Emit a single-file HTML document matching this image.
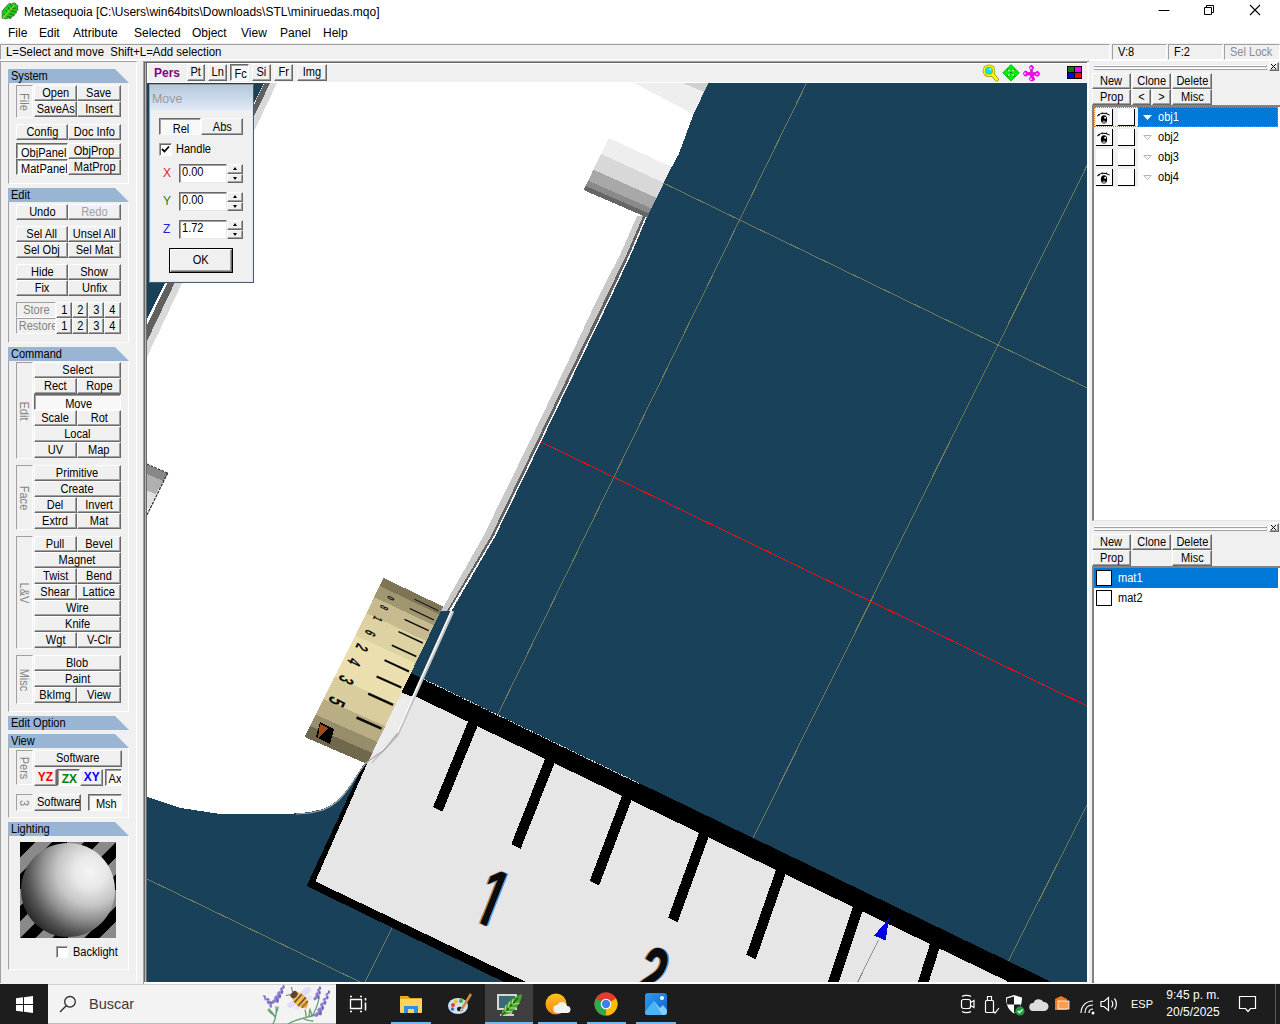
<!DOCTYPE html><html><head><meta charset="utf-8"><title>Metasequoia</title><style>
html,body{margin:0;padding:0;background:#f0f0f0;overflow:hidden}
#r{position:relative;width:1280px;height:1024px;overflow:hidden;font:12px "Liberation Sans",sans-serif;color:#000;background:#f0f0f0}
#r div{position:absolute;box-sizing:border-box;white-space:nowrap}
.t{display:inline-block;transform:scaleX(.92);transform-origin:50% 50%}
.tl{display:inline-block;transform:scaleX(.92);transform-origin:0 50%}
.b{height:16px;background:#f0f0f0;border-top:1px solid #fff;border-left:1px solid #fff;border-right:1px solid #696969;border-bottom:1px solid #696969;box-shadow:inset -1px -1px 0 #a0a0a0;text-align:center;line-height:15px;overflow:hidden}
.p{height:16px;background:#f8f8f8;border-top:1px solid #696969;border-left:1px solid #696969;border-right:1px solid #fff;border-bottom:1px solid #fff;box-shadow:inset 1px 1px 0 #a0a0a0;text-align:center;line-height:15px;overflow:hidden;padding-left:2px;padding-top:2px}
.h{left:8px;width:121px;height:14px;background:#9ab4d4;clip-path:polygon(0 0,107px 0,121px 14px,0 14px);line-height:14px;padding-left:3px}
.g{left:8px;width:121px;border-left:1px solid #a0a0a0;border-right:1px solid #fff;border-bottom:1px solid #fff}
.v{left:16px;width:17px;border-top:1px solid #a0a0a0;border-left:1px solid #a0a0a0;border-right:1px solid #fff;border-bottom:1px solid #fff;color:#848484}
.v i{position:absolute;left:7px;top:50%;font-style:normal;transform:translate(-50%,-50%) rotate(90deg) scaleX(.92);display:block;line-height:12px}
.sf{top:44px;height:16px;border-top:1px solid #a0a0a0;border-left:1px solid #a0a0a0;border-right:1px solid #fff;border-bottom:1px solid #fff;line-height:14px;padding-left:5px}
</style></head><body><div id="r">
<div style="left:0;top:0;width:1280px;height:22px;background:#fff"></div>
<div style="left:0;top:22px;width:1280px;height:21px;background:#fff"></div>
<svg style="position:absolute;left:0;top:0" width="20" height="22" viewBox="0 0 20 22"><path d="M2 18.500L2.200 11 6 6.500 9.500 3.200 12 4.300 13 3 15.500 3.200 16 5 18 5.500 17.500 8 18 10 16 11 16.500 13 14.500 13.500 14 16 12 16 11 18.500 8 18 6 19 4 18.200z" fill="#1ad01a" stroke="#2a6a3a" stroke-width=".8"/><path d="M4 13.500l2 2.500M5.500 10l2.500 3.500M8 7l2.500 4M10.500 4.500l2 4M7 16.500l4 .5M9 14l4.500 .5M11 11l4.500 .5M12.500 8.500l4-.5" stroke="#167016" stroke-width="1" fill="none"/><path d="M2.500 18.500L14 5.500" stroke="#c4d808" stroke-width="1.100"/></svg>
<div style="left:24px;top:4px;line-height:16px;font-size:12px"><span class="tl" id="ttl" style="transform:scaleX(1)">Metasequoia [C:\Users\win64bits\Downloads\STL\miniruedas.mqo]</span></div>
<svg style="position:absolute;left:1140px;top:0" width="140" height="22" viewBox="0 0 140 22"><path d="M18.5 10.5h11" stroke="#000" stroke-width="1"/><path d="M64.5 7.5h7v7h-7z M66.5 7.5v-2h7v7h-2" fill="none" stroke="#000" stroke-width="1"/><path d="M110 5l10 10M120 5l-10 10" stroke="#000" stroke-width="1.1"/></svg>
<div style="left:8px;top:25px;line-height:17px;font-size:12px" class="mn">File</div>
<div style="left:39px;top:25px;line-height:17px;font-size:12px" class="mn">Edit</div>
<div style="left:73px;top:25px;line-height:17px;font-size:12px" class="mn">Attribute</div>
<div style="left:134px;top:25px;line-height:17px;font-size:12px" class="mn">Selected</div>
<div style="left:192px;top:25px;line-height:17px;font-size:12px" class="mn">Object</div>
<div style="left:241px;top:25px;line-height:17px;font-size:12px" class="mn">View</div>
<div style="left:280px;top:25px;line-height:17px;font-size:12px" class="mn">Panel</div>
<div style="left:323px;top:25px;line-height:17px;font-size:12px" class="mn">Help</div>
<div style="left:0;top:43px;width:1280px;height:18px;background:#f0f0f0"></div>
<div class="sf" style="left:0px;top:44px;width:1110px;height:16px;"><span class="tl" style="transform:scaleX(.951)">L=Select and move&nbsp; Shift+L=Add selection</span></div>
<div class="sf" style="left:1112px;top:44px;width:55px;height:16px;"><span class="tl">V:8</span></div>
<div class="sf" style="left:1168px;top:44px;width:55px;height:16px;"><span class="tl">F:2</span></div>
<div class="sf" style="left:1224px;top:44px;width:56px;height:16px;color:#8c8c8c;"><span class="tl">Sel Lock</span></div>
<div style="left:0;top:60px;width:137px;height:924px;border-top:1px solid #fff;background:#f0f0f0"></div>
<div style="left:0;top:61px;width:138px;height:922px;border-top:1px solid #a0a0a0;border-left:1px solid #a0a0a0;border-right:2px solid #fff"></div>
<div class="h" style="top:69px"><span class="tl">System</span></div>
<div class="g" style="top:83px;height:101px"></div>
<div class="v" style="top:85px;height:33px"><i>File</i></div>
<div class="b" style="left:34px;top:85px;width:43px;"><span class="t">Open</span></div>
<div class="b" style="left:77px;top:85px;width:44px;"><span class="t">Save</span></div>
<div class="b" style="left:34px;top:101px;width:43px;"><span class="t">SaveAs</span></div>
<div class="b" style="left:77px;top:101px;width:44px;"><span class="t">Insert</span></div>
<div class="b" style="left:16px;top:124px;width:52px;"><span class="t">Config</span></div>
<div class="b" style="left:68px;top:124px;width:53px;"><span class="t">Doc Info</span></div>
<div class="p" style="left:16px;top:143px;width:52px;"><span class="t">ObjPanel</span></div>
<div class="b" style="left:68px;top:143px;width:53px;"><span class="t">ObjProp</span></div>
<div class="p" style="left:16px;top:159px;width:52px;"><span class="t">MatPanel</span></div>
<div class="b" style="left:68px;top:159px;width:53px;"><span class="t">MatProp</span></div>
<div class="h" style="top:188px"><span class="tl">Edit</span></div>
<div class="g" style="top:202px;height:141px"></div>
<div class="b" style="left:16px;top:204px;width:52px;"><span class="t">Undo</span></div>
<div class="b" style="left:68px;top:204px;width:53px;color:#a0a0a0;"><span class="t">Redo</span></div>
<div class="b" style="left:16px;top:226px;width:52px;"><span class="t">Sel All</span></div>
<div class="b" style="left:68px;top:226px;width:53px;"><span class="t">Unsel All</span></div>
<div class="b" style="left:16px;top:242px;width:52px;"><span class="t">Sel Obj</span></div>
<div class="b" style="left:68px;top:242px;width:53px;"><span class="t">Sel Mat</span></div>
<div class="b" style="left:16px;top:264px;width:52px;"><span class="t">Hide</span></div>
<div class="b" style="left:68px;top:264px;width:53px;"><span class="t">Show</span></div>
<div class="b" style="left:16px;top:280px;width:52px;"><span class="t">Fix</span></div>
<div class="b" style="left:68px;top:280px;width:53px;"><span class="t">Unfix</span></div>
<div class="v" style="top:302px;height:16px;width:40px;text-align:center;line-height:14px;overflow:hidden"><span class="t">Store</span></div>
<div class="b" style="left:56px;top:302px;width:16px;"><span class="t">1</span></div>
<div class="b" style="left:72px;top:302px;width:16px;"><span class="t">2</span></div>
<div class="b" style="left:88px;top:302px;width:16px;"><span class="t">3</span></div>
<div class="b" style="left:104px;top:302px;width:17px;"><span class="t">4</span></div>
<div class="v" style="top:318px;height:16px;width:40px;text-align:center;line-height:14px;overflow:hidden"><span class="t">Restore</span></div>
<div class="b" style="left:56px;top:318px;width:16px;"><span class="t">1</span></div>
<div class="b" style="left:72px;top:318px;width:16px;"><span class="t">2</span></div>
<div class="b" style="left:88px;top:318px;width:16px;"><span class="t">3</span></div>
<div class="b" style="left:104px;top:318px;width:17px;"><span class="t">4</span></div>
<div class="h" style="top:347px"><span class="tl">Command</span></div>
<div class="g" style="top:361px;height:351px"></div>
<div class="v" style="top:362px;height:97px"><i>Edit</i></div>
<div class="b" style="left:34px;top:362px;width:87px;"><span class="t">Select</span></div>
<div class="b" style="left:34px;top:378px;width:43px;"><span class="t">Rect</span></div>
<div class="b" style="left:77px;top:378px;width:44px;"><span class="t">Rope</span></div>
<div class="p" style="left:34px;top:394px;width:87px;"><span class="t">Move</span></div>
<div class="b" style="left:34px;top:410px;width:43px;"><span class="t">Scale</span></div>
<div class="b" style="left:77px;top:410px;width:44px;"><span class="t">Rot</span></div>
<div class="b" style="left:34px;top:426px;width:87px;"><span class="t">Local</span></div>
<div class="b" style="left:34px;top:442px;width:43px;"><span class="t">UV</span></div>
<div class="b" style="left:77px;top:442px;width:44px;"><span class="t">Map</span></div>
<div class="v" style="top:465px;height:65px"><i>Face</i></div>
<div class="b" style="left:34px;top:465px;width:87px;"><span class="t">Primitive</span></div>
<div class="b" style="left:34px;top:481px;width:87px;"><span class="t">Create</span></div>
<div class="b" style="left:34px;top:497px;width:43px;"><span class="t">Del</span></div>
<div class="b" style="left:77px;top:497px;width:44px;"><span class="t">Invert</span></div>
<div class="b" style="left:34px;top:513px;width:43px;"><span class="t">Extrd</span></div>
<div class="b" style="left:77px;top:513px;width:44px;"><span class="t">Mat</span></div>
<div class="v" style="top:536px;height:113px"><i>L&amp;V</i></div>
<div class="b" style="left:34px;top:536px;width:43px;"><span class="t">Pull</span></div>
<div class="b" style="left:77px;top:536px;width:44px;"><span class="t">Bevel</span></div>
<div class="b" style="left:34px;top:552px;width:87px;"><span class="t">Magnet</span></div>
<div class="b" style="left:34px;top:568px;width:43px;"><span class="t">Twist</span></div>
<div class="b" style="left:77px;top:568px;width:44px;"><span class="t">Bend</span></div>
<div class="b" style="left:34px;top:584px;width:43px;"><span class="t">Shear</span></div>
<div class="b" style="left:77px;top:584px;width:44px;"><span class="t">Lattice</span></div>
<div class="b" style="left:34px;top:600px;width:87px;"><span class="t">Wire</span></div>
<div class="b" style="left:34px;top:616px;width:87px;"><span class="t">Knife</span></div>
<div class="b" style="left:34px;top:632px;width:43px;"><span class="t">Wgt</span></div>
<div class="b" style="left:77px;top:632px;width:44px;"><span class="t">V-Clr</span></div>
<div class="v" style="top:655px;height:49px"><i>Misc</i></div>
<div class="b" style="left:34px;top:655px;width:87px;"><span class="t">Blob</span></div>
<div class="b" style="left:34px;top:671px;width:87px;"><span class="t">Paint</span></div>
<div class="b" style="left:34px;top:687px;width:43px;"><span class="t">BkImg</span></div>
<div class="b" style="left:77px;top:687px;width:44px;"><span class="t">View</span></div>
<div class="h" style="top:716px"><span class="tl">Edit Option</span></div>
<div class="h" style="top:734px"><span class="tl">View</span></div>
<div class="g" style="top:748px;height:70px"></div>
<div class="v" style="top:750px;height:35px"><i>Pers</i></div>
<div class="b" style="left:34px;top:750px;width:88px;height:17px;line-height:16px;line-height:14px;"><span class="t">Software</span></div>
<div class="b" style="left:34px;top:769px;width:23px;height:17px;line-height:16px;font-size:13px;line-height:14px;color:#f00;"><span class="t"><b>YZ</b></span></div>
<div class="p" style="left:57px;top:769px;width:23px;height:17px;line-height:16px;font-size:13px;line-height:14px;color:#008000;"><span class="t"><b>ZX</b></span></div>
<div class="b" style="left:80px;top:769px;width:23px;height:17px;line-height:16px;font-size:13px;line-height:14px;color:#00f;"><span class="t"><b>XY</b></span></div>
<div class="p" style="left:105px;top:769px;width:17px;height:17px;line-height:16px;line-height:14px;"><span class="t">Ax</span></div>
<div class="v" style="top:794px;height:17px"><i>3</i></div>
<div class="b" style="left:34px;top:794px;width:47px;height:17px;line-height:16px;line-height:14px;"><span class="t">Software</span></div>
<div class="p" style="left:88px;top:794px;width:34px;height:17px;line-height:16px;line-height:14px;"><span class="t">Msh</span></div>
<div class="h" style="top:822px"><span class="tl">Lighting</span></div>
<div class="g" style="top:836px;height:134px"></div>
<svg style="position:absolute;left:20px;top:842px" width="96" height="96" viewBox="0 0 96 96"><defs><radialGradient id="sg" gradientUnits="userSpaceOnUse" cx="70" cy="30" r="80"><stop offset="0" stop-color="#f4f4f4"/><stop offset="0.2" stop-color="#e8e8e8"/><stop offset="0.42" stop-color="#c4c4c4"/><stop offset="0.6" stop-color="#909090"/><stop offset="0.78" stop-color="#525252"/><stop offset="0.92" stop-color="#2e2e2e"/><stop offset="1" stop-color="#242424"/></radialGradient></defs><path d="M0 0h16L-80 96h-16z" fill="#000"/><path d="M16 0h16L-64 96h-16z" fill="#8a8a8a"/><path d="M32 0h16L-48 96h-16z" fill="#000"/><path d="M48 0h16L-32 96h-16z" fill="#8a8a8a"/><path d="M64 0h16L-16 96h-16z" fill="#000"/><path d="M80 0h16L0 96h-16z" fill="#8a8a8a"/><path d="M96 0h16L16 96h-16z" fill="#000"/><path d="M112 0h16L32 96h-16z" fill="#8a8a8a"/><path d="M128 0h16L48 96h-16z" fill="#000"/><path d="M144 0h16L64 96h-16z" fill="#8a8a8a"/><path d="M160 0h16L80 96h-16z" fill="#000"/><path d="M176 0h16L96 96h-16z" fill="#8a8a8a"/><circle cx="48" cy="48" r="47" fill="url(#sg)"/></svg>
<div style="left:56px;top:946px;width:12px;height:12px;background:#fff;border-top:1px solid #a0a0a0;border-left:1px solid #a0a0a0;border-right:1px solid #fff;border-bottom:1px solid #fff;box-shadow:inset 1px 1px 0 #696969"></div>
<div style="left:73px;top:945px;line-height:14px"><span class="tl">Backlight</span></div>
<div style="left:137px;top:61px;width:8px;height:923px;background:#f0f0f0"></div>
<div style="left:143px;top:61px;width:946px;height:923px;background:#fff;border-left:1px solid #a0a0a0;border-top:1px solid #a0a0a0"></div>
<div style="left:144px;top:62px;width:943px;height:920px;background:#19415a;border-left:1px solid #696969;border-top:1px solid #696969"></div>
<div style="left:145px;top:63px;width:2px;height:919px;border-left:1px solid #b4b4b4;border-right:1px solid #696969"></div>
<div style="left:147px;top:63px;width:940px;height:20px;background:#f0f0f0;border-top:1px solid #fff;border-left:1px solid #fff;border-bottom:1px solid #fff"></div>
<div style="left:154px;top:66px;line-height:15px;color:#800080;font-weight:bold;font-size:12px">Pers</div>
<div class="b" style="left:187px;top:64px;width:18px;height:17px;line-height:16px;line-height:14px;"><span class="t">Pt</span></div>
<div class="b" style="left:208px;top:64px;width:19px;height:17px;line-height:16px;line-height:14px;"><span class="t">Ln</span></div>
<div class="p" style="left:230px;top:64px;width:19px;height:17px;line-height:16px;line-height:14px;"><span class="t">Fc</span></div>
<div class="b" style="left:252px;top:64px;width:19px;height:17px;line-height:16px;line-height:14px;"><span class="t">Si</span></div>
<div class="b" style="left:274px;top:64px;width:19px;height:17px;line-height:16px;line-height:14px;"><span class="t">Fr</span></div>
<div class="b" style="left:297px;top:64px;width:30px;height:17px;line-height:16px;line-height:14px;"><span class="t">Img</span></div>
<svg style="position:absolute;left:980px;top:63px" width="104" height="19" viewBox="0 0 104 19">
<path d="M12.500 11.500l4.300 5" stroke="#a0a000" stroke-width="4.200" stroke-linecap="round"/><circle cx="9" cy="7.700" r="6.300" fill="#a0a000"/><circle cx="9" cy="7.700" r="5.500" fill="#ffff00"/><path d="M12.500 11.500l4.300 5" stroke="#ffff00" stroke-width="2.600" stroke-linecap="round"/><circle cx="9" cy="7.700" r="3.900" fill="#a0a000"/><circle cx="9" cy="7.700" r="3.300" fill="#00e4ff"/><circle cx="10.300" cy="6.300" r="1" fill="#d8ffff"/>
<path d="M31 1.600l8.200 8.200-8.200 8.200-8.200-8.200z" fill="#00f000" stroke="#00b000" stroke-width=".8"/><path d="M27.500 6.300l2 2M34.500 6.300l-2 2M27.500 13.300l2-2M34.500 13.300l-2-2" stroke="#d0ffd0" stroke-width="1.300"/><path d="M27 5.800h2v.8h-1.200v1.200H27zM35 5.800h-2v.8h1.200v1.200H35zM27 13.800h2v-.8h-1.200v-1.200H27zM35 13.800h-2v-.8h1.200v-1.200H35z" fill="#00a000"/><rect x="30.500" y="9.300" width="1" height="1" fill="#000"/>
<path d="M51 2.500c2 0 3 1.500 2.500 3l-1 1v3h3l1-1c1.500-.5 3 .5 3 2.500s-2 2.500-3.500 2l-.5-1h-2v2.500l1 .5c.5 1.500-.5 3-2.500 3s-3-1.500-2.500-3l1-.5V12h-3l-1 1c-1.500.5-3-.5-3-2.500s2-3 3.500-2l.5 1h3V6.500l-1-1c-.5-1.500.5-3 2.500-3z" fill="#ff00ff" stroke="#c000c0" stroke-width=".6"/><circle cx="51" cy="5" r=".9" fill="#f0f0f0"/><circle cx="57" cy="11" r=".9" fill="#f0f0f0"/><circle cx="45" cy="10.500" r=".9" fill="#f0f0f0"/><circle cx="51" cy="16" r=".9" fill="#f0f0f0"/>
<rect x="87" y="3" width="15" height="13" fill="#000"/><rect x="88" y="4" width="6" height="5" fill="#008000"/><rect x="95" y="4" width="6" height="5" fill="#f0f"/><rect x="88" y="10" width="6" height="5" fill="#00f"/><rect x="95" y="10" width="6" height="5" fill="#f00"/>
</svg>
<svg style="position:absolute;left:147px;top:83px" width="940" height="899" viewBox="147 83 940 899" shape-rendering="crispEdges">
<defs><clipPath id="c1"><path d="M0 -44H16.4V1H10.1V-4.8H0z"/></clipPath></defs>
<rect x="147" y="83" width="940" height="899" fill="#19415a"/>
<line x1="806.6" y1="83.0" x2="497.0" y2="716.0" stroke="#717c5c" stroke-width="1" />
<line x1="655.0" y1="179.0" x2="1087.0" y2="388.0" stroke="#717c5c" stroke-width="1" />
<line x1="1087.0" y1="165.6" x2="752.0" y2="840.0" stroke="#717c5c" stroke-width="1" />
<line x1="1087.0" y1="805.0" x2="1005.0" y2="968.0" stroke="#717c5c" stroke-width="1" />
<line x1="147.0" y1="879.0" x2="360.0" y2="982.0" stroke="#717c5c" stroke-width="1" />
<line x1="393.0" y1="926.0" x2="365.0" y2="982.0" stroke="#717c5c" stroke-width="1" />
<line x1="541.0" y1="442.0" x2="1087.0" y2="706.0" stroke="#e81010" stroke-width="1" />
<polygon points="407.0,671.0 1051.5,982.0 503.8,982.0 306.5,886.0" fill="#000000" />
<polygon points="400.0,689.0 1009.0,982.0 526.0,982.0 315.3,881.4" fill="#e6e6e6" />
<polygon points="398.0,671.0 420.0,679.0 413.0,697.0 396.0,690.0" fill="#000" />
<line x1="421.0" y1="678.0" x2="640.0" y2="784.0" stroke="#ffffff" stroke-width="1" stroke-dasharray="2 1" opacity=".85"/>
<polygon points="469.3,718.7 478.7,723.3 442.4,811.8 433.0,807.2" fill="#000" />
<polygon points="546.3,755.6 555.7,760.1 520.7,848.6 511.3,844.1" fill="#000" />
<polygon points="623.3,792.4 632.7,797.0 599.1,885.5 589.7,880.9" fill="#000" />
<polygon points="700.3,829.3 709.7,833.8 677.5,922.3 668.1,917.8" fill="#000" />
<polygon points="777.3,866.1 786.7,870.7 755.8,959.2 746.4,954.6" fill="#000" />
<polygon points="854.3,903.0 863.7,907.5 834.2,996.0 824.8,991.5" fill="#000" />
<polygon points="931.3,939.8 940.7,944.4 912.6,1032.9 903.2,1028.3" fill="#000" />
<polygon points="1008.3,976.7 1017.7,981.2 990.9,1069.7 981.5,1065.2" fill="#000" />
<text x="0" y="0" transform="matrix(0.97 0.47 -0.68 1.72 468.9 918.5)" font-family="Liberation Sans, sans-serif" font-weight="bold" font-size="44" fill="#c88a48" clip-path="url(#c1)">1</text>
<text x="0" y="0" transform="matrix(0.97 0.47 -0.68 1.72 472.1 918.5)" font-family="Liberation Sans, sans-serif" font-weight="bold" font-size="44" fill="#4a9cf0" clip-path="url(#c1)">1</text>
<text x="0" y="0" transform="matrix(0.97 0.47 -0.68 1.72 470.5 918.5)" font-family="Liberation Sans, sans-serif" font-weight="bold" font-size="44" fill="#0c0c0c" clip-path="url(#c1)">1</text>
<text x="0" y="0" transform="matrix(0.97 0.47 -0.68 1.72 627.4 996)" font-family="Liberation Sans, sans-serif" font-weight="bold" font-size="44" fill="#c88a48">2</text>
<text x="0" y="0" transform="matrix(0.97 0.47 -0.68 1.72 630.6 996)" font-family="Liberation Sans, sans-serif" font-weight="bold" font-size="44" fill="#4a9cf0">2</text>
<text x="0" y="0" transform="matrix(0.97 0.47 -0.68 1.72 629 996)" font-family="Liberation Sans, sans-serif" font-weight="bold" font-size="44" fill="#0c0c0c">2</text>
<polygon points="404.0,697.0 414.0,697.0 396.0,735.0 368.0,762.0 364.0,764.0 391.0,706.0" fill="#ececec" />
<line x1="878.4" y1="940.0" x2="857.8" y2="982.0" stroke="#909090" stroke-width="1" />
<polygon points="888.8,918.7 874.0,935.6 885.7,940.5" fill="#0000e0" />
<polygon points="264.0,83.0 264.5,83.0 147.0,325.0 147.0,319.0" fill="#ffffff" />
<polygon points="264.5,83.0 270.0,83.0 147.0,341.0 147.0,325.0" fill="#606060" />
<polygon points="270.0,83.0 277.0,83.0 147.0,357.0 147.0,341.0" fill="#d9d9d9" />
<polygon points="277.0,83.0 708.4,83.0 693.6,114.0 678.8,154.0 669.0,172.0 656.0,199.0 647.4,216.0 631.3,253.8 608.3,302.7 580.5,360.0 541.0,442.0 495.4,536.0 451.5,611.0 441.0,609.0 407.7,671.0 391.0,706.0 365.5,762.0 358.0,773.0 351.0,784.0 345.0,792.0 339.0,799.0 331.0,805.0 323.0,809.0 310.0,812.0 294.0,813.5 217.0,813.5 181.0,808.0 147.0,797.0 147.0,357.0" fill="#ffffff" />
<polygon points="634.0,83.0 682.6,83.0 703.8,91.6 708.4,83.0 708.4,83.0 693.0,114.0" fill="#eeeeee" />
<polygon points="682.6,83.0 708.4,83.0 704.2,92.0" fill="#d0d0d0" />
<polygon points="637.1,216.0 620.5,253.8 595.6,302.7 568.8,360.0 529.5,442.0 483.5,536.0 441.0,611.0 447.0,611.0 491.0,536.0 536.5,442.0 575.8,360.0 603.4,302.7 626.9,253.8 643.0,216.0" fill="#c8c8c8" />
<polygon points="643.0,216.0 626.9,253.8 603.4,302.7 575.8,360.0 536.5,442.0 491.0,536.0 447.0,611.0 450.5,611.0 495.4,536.0 541.0,442.0 580.5,360.0 608.3,302.7 631.3,253.8 647.4,216.0" fill="#606060" />
<polygon points="645.8,216.0 629.7,253.8 606.7,302.7 578.9,360.0 539.4,442.0 493.8,536.0 448.9,611.0 450.5,611.0 495.4,536.0 541.0,442.0 580.5,360.0 608.3,302.7 631.3,253.8 647.4,216.0" fill="#f4f4f4" />
<polygon points="609.0,138.0 671.5,167.0 663.9,182.7 601.1,154.1" fill="#eeeeee" />
<polygon points="601.1,154.1 663.9,182.7 656.6,197.8 593.4,169.7" fill="#d8d8d8" />
<polygon points="593.4,169.7 656.6,197.8 651.4,208.4 588.0,180.6" fill="#a8a8a8" />
<polygon points="588.0,180.6 651.4,208.4 649.0,213.5 585.4,185.8" fill="#8a8a8a" />
<polygon points="585.4,185.8 649.0,213.5 647.0,217.5 583.4,190.0" fill="#666666" />
<polygon points="147.0,464.0 167.7,473.0 163.4,481.0 147.0,474.2" fill="#888888" />
<polygon points="147.0,474.2 163.4,481.0 155.8,494.0 147.0,490.6" fill="#b0b0b0" />
<polygon points="147.0,490.6 155.8,494.0 149.5,508.0 147.0,508.0" fill="#e0e0e0" />
<line x1="167.7" y1="473.0" x2="147.0" y2="514.8" stroke="#222" stroke-width="1.2" stroke-dasharray="3 1" shape-rendering="auto"/>
<line x1="147.0" y1="464.0" x2="167.7" y2="473.0" stroke="#222" stroke-width="1" stroke-dasharray="2.500 1.500" shape-rendering="auto"/>
<polygon points="383.7,578.0 443.0,606.5 439.2,614.4 379.7,586.0" fill="#7e7556" />
<polygon points="379.7,586.0 439.2,614.4 433.9,625.4 374.2,597.1" fill="#a0966f" />
<polygon points="374.2,597.1 433.9,625.4 426.3,641.1 366.3,613.0" fill="#c6ba8e" />
<polygon points="366.3,613.0 426.3,641.1 415.6,663.2 355.2,635.2" fill="#ddd2a2" />
<polygon points="355.2,635.2 415.6,663.2 395.9,704.1 334.7,676.6" fill="#ebdfaf" />
<polygon points="334.7,676.6 395.9,704.1 385.2,726.2 323.6,698.8" fill="#d9cd9d" />
<polygon points="323.6,698.8 385.2,726.2 377.6,742.0 315.7,714.7" fill="#b9ad84" />
<polygon points="315.7,714.7 377.6,742.0 372.3,753.0 310.1,725.9" fill="#978d6a" />
<polygon points="310.1,725.9 372.3,753.0 367.0,764.0 304.6,737.0" fill="#70684d" />
<line x1="414.4" y1="599.2" x2="438.4" y2="610.7" stroke="#0a0a0a" stroke-width="1.0" shape-rendering="auto"/>
<line x1="409.8" y1="608.5" x2="433.9" y2="620.0" stroke="#0a0a0a" stroke-width="1.2" shape-rendering="auto"/>
<line x1="404.5" y1="619.3" x2="428.7" y2="630.7" stroke="#0a0a0a" stroke-width="1.4" shape-rendering="auto"/>
<line x1="398.5" y1="631.6" x2="422.8" y2="643.0" stroke="#0a0a0a" stroke-width="1.6" shape-rendering="auto"/>
<line x1="391.8" y1="645.2" x2="416.3" y2="656.5" stroke="#0a0a0a" stroke-width="1.8" shape-rendering="auto"/>
<line x1="384.5" y1="660.2" x2="409.0" y2="671.5" stroke="#0a0a0a" stroke-width="2.0" shape-rendering="auto"/>
<line x1="376.6" y1="676.4" x2="401.3" y2="687.6" stroke="#0a0a0a" stroke-width="2.2" shape-rendering="auto"/>
<line x1="368.2" y1="693.6" x2="393.0" y2="704.8" stroke="#0a0a0a" stroke-width="2.4000000000000004" shape-rendering="auto"/>
<line x1="356.5" y1="717.5" x2="381.5" y2="728.6" stroke="#0a0a0a" stroke-width="2.6" shape-rendering="auto"/>
<text transform="translate(391.0 598.2) rotate(116) scale(0.8 1.5)" font-family="Liberation Sans, sans-serif" font-weight="bold" font-size="7" fill="#0c0c0c" text-anchor="middle" dominant-baseline="central">0</text>
<text transform="translate(384.5 607.7) rotate(116) scale(0.8 1.5)" font-family="Liberation Sans, sans-serif" font-weight="bold" font-size="8" fill="#0c0c0c" text-anchor="middle" dominant-baseline="central">8</text>
<text transform="translate(378.1 619.1) rotate(116) scale(0.8 1.5)" font-family="Liberation Sans, sans-serif" font-weight="bold" font-size="9" fill="#0c0c0c" text-anchor="middle" dominant-baseline="central">1</text>
<text transform="translate(369.9 633.0) rotate(116) scale(0.8 1.5)" font-family="Liberation Sans, sans-serif" font-weight="bold" font-size="10.5" fill="#0c0c0c" text-anchor="middle" dominant-baseline="central">6</text>
<text transform="translate(362.0 647.6) rotate(116) scale(0.8 1.5)" font-family="Liberation Sans, sans-serif" font-weight="bold" font-size="12" fill="#0c0c0c" text-anchor="middle" dominant-baseline="central">2</text>
<text transform="translate(354.4 662.0) rotate(116) scale(0.8 1.5)" font-family="Liberation Sans, sans-serif" font-weight="bold" font-size="13" fill="#0c0c0c" text-anchor="middle" dominant-baseline="central">4</text>
<text transform="translate(346.3 679.9) rotate(116) scale(0.8 1.5)" font-family="Liberation Sans, sans-serif" font-weight="bold" font-size="14.5" fill="#0c0c0c" text-anchor="middle" dominant-baseline="central">3</text>
<text transform="translate(336.8 701.8) rotate(116) scale(0.8 1.5)" font-family="Liberation Sans, sans-serif" font-weight="bold" font-size="16" fill="#0c0c0c" text-anchor="middle" dominant-baseline="central">5</text>
<polygon points="320.0,722.0 334.0,729.0 330.0,744.0 316.0,737.0" fill="#000" />
<polygon points="320.0,724.0 328.0,728.0 318.0,738.0" fill="#a04818" />
<polyline points="452.5,611 421.6,679.5 397,735 371,762" fill="none" stroke="#c4c4c4" stroke-width="3.6" shape-rendering="auto"/>
<polyline points="451.5,611 420.6,679.5 396,735 370,762" fill="none" stroke="#fff" stroke-width="1.6" shape-rendering="auto"/>
<polyline points="398,733 384,750 366,763 358,774 351,785 345,793 339,800 331,806 323,810 310,813 296,814" fill="none" stroke="#a8a8a8" stroke-width="1.2" shape-rendering="auto"/>
</svg>
<div style="left:149px;top:84px;width:105px;height:199px;background:#f0f0f0;border:1px solid #4a5a6a;border-top-color:#8ea0b4;border-left-color:#8ea0b4"></div>
<div style="left:150px;top:85px;width:103px;height:197px;border:1px solid #dce8f6"></div>
<div style="left:150px;top:85px;width:103px;height:25px;background:linear-gradient(#b4c8dc,#dfe9f6)"></div>
<div style="left:152px;top:92px;line-height:14px;color:#9a9a9a;font-size:13.500px"><span class="tl">Move</span></div>
<div class="p" style="left:159px;top:118px;width:42px;height:17px;line-height:16px;"><span class="t">Rel</span></div>
<div class="b" style="left:201px;top:118px;width:42px;height:17px;line-height:16px;"><span class="t">Abs</span></div>
<div style="left:159px;top:143px;width:13px;height:13px;background:#fff;border-top:1px solid #a0a0a0;border-left:1px solid #a0a0a0;border-right:1px solid #fff;border-bottom:1px solid #fff;box-shadow:inset 1px 1px 0 #696969"></div>
<svg style="position:absolute;left:161px;top:145px" width="9" height="9" viewBox="0 0 9 9"><path d="M1 4l2.500 2.500L8 1.500" fill="none" stroke="#000" stroke-width="1.8"/></svg>
<div style="left:176px;top:142px;line-height:14px"><span class="tl">Handle</span></div>
<div style="left:163px;top:166px;line-height:14px;color:#e02020">X</div>
<div style="left:179px;top:164px;width:48px;height:19px;background:#fff;border:1px solid #696969;border-right-color:#e8e8e8;border-bottom-color:#e8e8e8;box-shadow:inset 1px 1px 0 #a0a0a0;line-height:15px;padding-left:2px"><span class="tl">0.00</span></div>
<div class="b" style="left:227px;top:164px;width:16px;height:10px"></div>
<svg style="position:absolute;left:233px;top:167px" width="4" height="3" viewBox="0 0 4 3"><path d="M0 3L2 0L4 3z" fill="#000"/></svg>
<div class="b" style="left:227px;top:174px;width:16px;height:9px"></div>
<svg style="position:absolute;left:233px;top:177px" width="4" height="3" viewBox="0 0 4 3"><path d="M0 0L2 3L4 0z" fill="#000"/></svg>
<div style="left:163px;top:194px;line-height:14px;color:#208020">Y</div>
<div style="left:179px;top:192px;width:48px;height:19px;background:#fff;border:1px solid #696969;border-right-color:#e8e8e8;border-bottom-color:#e8e8e8;box-shadow:inset 1px 1px 0 #a0a0a0;line-height:15px;padding-left:2px"><span class="tl">0.00</span></div>
<div class="b" style="left:227px;top:192px;width:16px;height:10px"></div>
<svg style="position:absolute;left:233px;top:195px" width="4" height="3" viewBox="0 0 4 3"><path d="M0 3L2 0L4 3z" fill="#000"/></svg>
<div class="b" style="left:227px;top:202px;width:16px;height:9px"></div>
<svg style="position:absolute;left:233px;top:205px" width="4" height="3" viewBox="0 0 4 3"><path d="M0 0L2 3L4 0z" fill="#000"/></svg>
<div style="left:163px;top:222px;line-height:14px;color:#2020e0">Z</div>
<div style="left:179px;top:220px;width:48px;height:19px;background:#fff;border:1px solid #696969;border-right-color:#e8e8e8;border-bottom-color:#e8e8e8;box-shadow:inset 1px 1px 0 #a0a0a0;line-height:15px;padding-left:2px"><span class="tl">1.72</span></div>
<div class="b" style="left:227px;top:220px;width:16px;height:10px"></div>
<svg style="position:absolute;left:233px;top:223px" width="4" height="3" viewBox="0 0 4 3"><path d="M0 3L2 0L4 3z" fill="#000"/></svg>
<div class="b" style="left:227px;top:230px;width:16px;height:9px"></div>
<svg style="position:absolute;left:233px;top:233px" width="4" height="3" viewBox="0 0 4 3"><path d="M0 0L2 3L4 0z" fill="#000"/></svg>
<div style="left:169px;top:248px;width:64px;height:25px;border:1px solid #000"></div>
<div class="b" style="left:170px;top:249px;width:62px;height:23px;line-height:22px;line-height:20px;"><span class="t">OK</span></div>
<div style="left:1090px;top:60px;width:190px;height:924px;background:#f0f0f0;border-top:1px solid #fff"></div>
<div style="left:1094px;top:65px;width:173px;height:2px;border-top:1px solid #fff;border-bottom:1px solid #a0a0a0;border-right:1px solid #a0a0a0"></div>
<div style="left:1094px;top:68px;width:173px;height:2px;border-top:1px solid #fff;border-bottom:1px solid #a0a0a0;border-right:1px solid #a0a0a0"></div>
<div class="b" style="left:1269px;top:62px;width:10px;height:9px"></div>
<svg style="position:absolute;left:1271px;top:64px" width="5" height="5" viewBox="0 0 5 5"><path d="M0 0l5 5M5 0l-5 5" stroke="#000" stroke-width="1"/></svg>
<div class="b" style="left:1092px;top:73px;width:39px;"><span class="t">New</span></div>
<div class="b" style="left:1132px;top:73px;width:39px;"><span class="t">Clone</span></div>
<div class="b" style="left:1172px;top:73px;width:40px;"><span class="t">Delete</span></div>
<div class="b" style="left:1092px;top:89px;width:39px;"><span class="t">Prop</span></div>
<div class="b" style="left:1132px;top:89px;width:19px;"><span class="t">&lt;</span></div>
<div class="b" style="left:1152px;top:89px;width:19px;"><span class="t">&gt;</span></div>
<div class="b" style="left:1172px;top:89px;width:40px;"><span class="t">Misc</span></div>
<div style="left:1092px;top:105px;width:188px;height:416px;background:#fff;border-top:2px solid #828282;border-left:2px solid #828282;border-bottom:1px solid #e3e3e3"></div>
<div style="left:1094px;top:107px;width:44px;height:20px;background:#f0f0f0"></div>
<div style="left:1138px;top:107px;width:140px;height:20px;background:#0078d7"></div>
<div style="left:1094px;top:107px;width:184px;height:20px;border:1px dotted #d87a1c"></div>
<div style="left:1096px;top:109px;width:17px;height:17px;background:#fff;border-right:1px solid #000;border-bottom:1px solid #000"><svg style="position:absolute;left:0;top:1px" width="16" height="16" viewBox="0 0 17 17"><path d="M1.500 6.500C4 3 10 2.500 14.500 5.500" fill="none" stroke="#000" stroke-width="1.100"/><path d="M2.500 4.500l1 1.500M6.500 2.500l.5 1.500M11 2.500l-.5 1.500" stroke="#000" stroke-width=".9"/><ellipse cx="8.500" cy="10" rx="3.300" ry="4.300" fill="#000"/><circle cx="8.500" cy="13" r="1.800" fill="#888"/><circle cx="9.700" cy="8.300" r="1.100" fill="#fff"/></svg></div>
<div style="left:1118px;top:109px;width:17px;height:17px;background:#fff;border-right:1px solid #000;border-bottom:1px solid #000"></div>
<svg style="position:absolute;left:1143px;top:115px" width="9" height="5" viewBox="0 0 9 5"><path d="M0 0h9L4.500 5z" fill="#fff"/></svg>
<div style="left:1158px;top:110px;line-height:14px;color:#fff"><span class="tl">obj1</span></div>
<div style="left:1094px;top:127px;width:44px;height:20px;background:#f0f0f0"></div>
<div style="left:1096px;top:129px;width:17px;height:17px;background:#fff;border-right:1px solid #000;border-bottom:1px solid #000"><svg style="position:absolute;left:0;top:1px" width="16" height="16" viewBox="0 0 17 17"><path d="M1.500 6.500C4 3 10 2.500 14.500 5.500" fill="none" stroke="#000" stroke-width="1.100"/><path d="M2.500 4.500l1 1.500M6.500 2.500l.5 1.500M11 2.500l-.5 1.500" stroke="#000" stroke-width=".9"/><ellipse cx="8.500" cy="10" rx="3.300" ry="4.300" fill="#000"/><circle cx="8.500" cy="13" r="1.800" fill="#888"/><circle cx="9.700" cy="8.300" r="1.100" fill="#fff"/></svg></div>
<div style="left:1118px;top:129px;width:17px;height:17px;background:#fff;border-right:1px solid #000;border-bottom:1px solid #000"></div>
<svg style="position:absolute;left:1143px;top:135px" width="9" height="5" viewBox="0 0 9 5"><path d="M.8 .500h7.400L4.500 4.500z" fill="#fff" stroke="#b4b4b4" stroke-width="1"/></svg>
<div style="left:1158px;top:130px;line-height:14px;color:#000"><span class="tl">obj2</span></div>
<div style="left:1094px;top:147px;width:44px;height:20px;background:#f0f0f0"></div>
<div style="left:1096px;top:149px;width:17px;height:17px;background:#fff;border-right:1px solid #000;border-bottom:1px solid #000"></div>
<div style="left:1118px;top:149px;width:17px;height:17px;background:#fff;border-right:1px solid #000;border-bottom:1px solid #000"></div>
<svg style="position:absolute;left:1143px;top:155px" width="9" height="5" viewBox="0 0 9 5"><path d="M.8 .500h7.400L4.500 4.500z" fill="#fff" stroke="#b4b4b4" stroke-width="1"/></svg>
<div style="left:1158px;top:150px;line-height:14px;color:#000"><span class="tl">obj3</span></div>
<div style="left:1094px;top:167px;width:44px;height:20px;background:#f0f0f0"></div>
<div style="left:1096px;top:169px;width:17px;height:17px;background:#fff;border-right:1px solid #000;border-bottom:1px solid #000"><svg style="position:absolute;left:0;top:1px" width="16" height="16" viewBox="0 0 17 17"><path d="M1.500 6.500C4 3 10 2.500 14.500 5.500" fill="none" stroke="#000" stroke-width="1.100"/><path d="M2.500 4.500l1 1.500M6.500 2.500l.5 1.500M11 2.500l-.5 1.500" stroke="#000" stroke-width=".9"/><ellipse cx="8.500" cy="10" rx="3.300" ry="4.300" fill="#000"/><circle cx="8.500" cy="13" r="1.800" fill="#888"/><circle cx="9.700" cy="8.300" r="1.100" fill="#fff"/></svg></div>
<div style="left:1118px;top:169px;width:17px;height:17px;background:#fff;border-right:1px solid #000;border-bottom:1px solid #000"></div>
<svg style="position:absolute;left:1143px;top:175px" width="9" height="5" viewBox="0 0 9 5"><path d="M.8 .500h7.400L4.500 4.500z" fill="#fff" stroke="#b4b4b4" stroke-width="1"/></svg>
<div style="left:1158px;top:170px;line-height:14px;color:#000"><span class="tl">obj4</span></div>
<div style="left:1094px;top:526px;width:173px;height:2px;border-top:1px solid #fff;border-bottom:1px solid #a0a0a0;border-right:1px solid #a0a0a0"></div>
<div style="left:1094px;top:529px;width:173px;height:2px;border-top:1px solid #fff;border-bottom:1px solid #a0a0a0;border-right:1px solid #a0a0a0"></div>
<div class="b" style="left:1269px;top:523px;width:10px;height:9px"></div>
<svg style="position:absolute;left:1271px;top:525px" width="5" height="5" viewBox="0 0 5 5"><path d="M0 0l5 5M5 0l-5 5" stroke="#000" stroke-width="1"/></svg>
<div class="b" style="left:1092px;top:534px;width:39px;"><span class="t">New</span></div>
<div class="b" style="left:1132px;top:534px;width:39px;"><span class="t">Clone</span></div>
<div class="b" style="left:1172px;top:534px;width:40px;"><span class="t">Delete</span></div>
<div class="b" style="left:1092px;top:550px;width:39px;"><span class="t">Prop</span></div>
<div class="b" style="left:1172px;top:550px;width:40px;"><span class="t">Misc</span></div>
<div style="left:1092px;top:566px;width:188px;height:417px;background:#fff;border-top:2px solid #828282;border-left:2px solid #828282"></div>
<div style="left:1094px;top:568px;width:184px;height:20px;background:#0078d7"></div>
<div style="left:1096px;top:570px;width:16px;height:16px;background:#fff;border:1px solid #000"></div>
<div style="left:1118px;top:571px;line-height:14px;color:#fff"><span class="tl">mat1</span></div>
<div style="left:1096px;top:590px;width:16px;height:16px;background:#fff;border:1px solid #000"></div>
<div style="left:1118px;top:591px;line-height:14px;color:#000"><span class="tl">mat2</span></div>
<div style="left:0;top:984px;width:1280px;height:40px;background:#1d1d1d"></div>
<div style="left:48px;top:984px;width:288px;height:40px;background:#f3f3f3;border-bottom:1px solid #bdbdbd;border-top:1px solid #d0d0d0"></div>
<svg style="position:absolute;left:16px;top:996px" width="17" height="17" viewBox="0 0 17 17"><path d="M0 2.300L7 1.300V8H0zM8 1.200L17 0V8H8zM0 9H7V15.700L0 14.700zM8 9H17V17L8 15.800z" fill="#fff"/></svg>
<svg style="position:absolute;left:58px;top:994px" width="20" height="20" viewBox="0 0 20 20"><circle cx="12" cy="7.800" r="5.300" fill="none" stroke="#2a2a2a" stroke-width="1.300"/><path d="M8.200 11.800L2 18" stroke="#2a2a2a" stroke-width="1.300"/></svg>
<div style="left:89px;top:995px;line-height:18px;font-size:14.500px;color:#3c3c3c">Buscar</div>
<svg style="position:absolute;left:256px;top:984px" width="84" height="40" viewBox="256 984 84 40"><g fill="none" stroke="#5fa070" stroke-width="1.300" stroke-linecap="round"><path d="M273 1024c3-6 4-10 3-17M275 1017c-2-4-4-6-6-8M276 1014c1-3 2-5 2-7M275 1016c-3-2-5-3-7-6M288 1024c8-5 16-6 24-8 4-6 6-12 7-18M312 1016c4-1 7-3 10-6M306 1017c0-3 0-5-1-7M309 1016c0-3 1-5 1-7M312 1016c-1-3-1-5-2-6M304 1019c3 1 6 2 9 2"/></g><ellipse cx="264.5" cy="996.5" rx="1.6" ry="1.0" transform="rotate(26 264.5 996.5)" fill="#7a66c0"/><ellipse cx="265.3" cy="998.7" rx="1.8" ry="1.1" transform="rotate(76 265.3 998.7)" fill="#8f7fd0"/><ellipse cx="267.9" cy="999.4" rx="1.9" ry="1.2" transform="rotate(26 267.9 999.4)" fill="#7a66c0"/><ellipse cx="268.0" cy="1002.2" rx="2.0" ry="1.3" transform="rotate(76 268.0 1002.2)" fill="#8f7fd0"/><ellipse cx="270.8" cy="1002.7" rx="2.1" ry="1.4" transform="rotate(26 270.8 1002.7)" fill="#7a66c0"/><ellipse cx="270.7" cy="1005.6" rx="2.2" ry="1.4" transform="rotate(76 270.7 1005.6)" fill="#8f7fd0"/><ellipse cx="283.5" cy="987.0" rx="1.9" ry="1.2" transform="rotate(95 283.5 987.0)" fill="#7a66c0"/><ellipse cx="281.5" cy="988.7" rx="2.0" ry="1.3" transform="rotate(145 281.5 988.7)" fill="#8f7fd0"/><ellipse cx="281.9" cy="991.8" rx="2.2" ry="1.4" transform="rotate(95 281.9 991.8)" fill="#7a66c0"/><ellipse cx="279.0" cy="992.9" rx="2.3" ry="1.5" transform="rotate(145 279.0 992.9)" fill="#8f7fd0"/><ellipse cx="279.6" cy="996.1" rx="2.4" ry="1.6" transform="rotate(95 279.6 996.1)" fill="#7a66c0"/><ellipse cx="276.4" cy="997.2" rx="2.6" ry="1.7" transform="rotate(145 276.4 997.2)" fill="#8f7fd0"/><ellipse cx="277.3" cy="1000.4" rx="2.7" ry="1.7" transform="rotate(95 277.3 1000.4)" fill="#7a66c0"/><ellipse cx="273.9" cy="1001.4" rx="2.9" ry="1.8" transform="rotate(145 273.9 1001.4)" fill="#8f7fd0"/><ellipse cx="320.0" cy="988.0" rx="1.8" ry="1.1" transform="rotate(83 320.0 988.0)" fill="#7a66c0"/><ellipse cx="318.5" cy="989.8" rx="1.9" ry="1.2" transform="rotate(133 318.5 989.8)" fill="#8f7fd0"/><ellipse cx="319.5" cy="992.5" rx="2.0" ry="1.3" transform="rotate(83 319.5 992.5)" fill="#7a66c0"/><ellipse cx="317.0" cy="994.0" rx="2.2" ry="1.4" transform="rotate(133 317.0 994.0)" fill="#8f7fd0"/><ellipse cx="318.2" cy="996.7" rx="2.3" ry="1.5" transform="rotate(83 318.2 996.7)" fill="#7a66c0"/><ellipse cx="315.5" cy="998.2" rx="2.5" ry="1.6" transform="rotate(133 315.5 998.2)" fill="#8f7fd0"/><ellipse cx="329.0" cy="992.0" rx="1.8" ry="1.1" transform="rotate(91 329.0 992.0)" fill="#7a66c0"/><ellipse cx="327.0" cy="994.2" rx="1.9" ry="1.2" transform="rotate(141 327.0 994.2)" fill="#8f7fd0"/><ellipse cx="327.3" cy="997.5" rx="2.0" ry="1.3" transform="rotate(91 327.3 997.5)" fill="#7a66c0"/><ellipse cx="324.5" cy="999.3" rx="2.1" ry="1.3" transform="rotate(141 324.5 999.3)" fill="#8f7fd0"/><ellipse cx="325.0" cy="1002.6" rx="2.2" ry="1.4" transform="rotate(91 325.0 1002.6)" fill="#7a66c0"/><ellipse cx="322.0" cy="1004.3" rx="2.3" ry="1.5" transform="rotate(141 322.0 1004.3)" fill="#8f7fd0"/><ellipse cx="322.6" cy="1007.8" rx="2.4" ry="1.5" transform="rotate(91 322.6 1007.8)" fill="#7a66c0"/><ellipse cx="319.4" cy="1009.4" rx="2.5" ry="1.6" transform="rotate(141 319.4 1009.4)" fill="#8f7fd0"/><ellipse cx="320.3" cy="1012.9" rx="2.6" ry="1.7" transform="rotate(91 320.3 1012.9)" fill="#7a66c0"/><ellipse cx="316.9" cy="1014.5" rx="2.8" ry="1.8" transform="rotate(141 316.9 1014.5)" fill="#8f7fd0"/><ellipse cx="306" cy="991.500" rx="6" ry="3.400" transform="rotate(-35 306 991.500)" fill="#e2dcf8"/><ellipse cx="308.500" cy="998" rx="4" ry="2.600" transform="rotate(-15 308.500 998)" fill="#e8e4fa"/><ellipse cx="291.500" cy="1004.500" rx="4.500" ry="2.800" transform="rotate(-30 291.500 1004.500)" fill="#e2dcf8"/><ellipse cx="297" cy="1008" rx="2.500" ry="1.800" fill="#e6e2fa"/><g transform="rotate(42 300 1000)"><ellipse cx="300" cy="1000" rx="9.500" ry="6" fill="#f2c04a"/><ellipse cx="292" cy="1000" rx="3" ry="4" fill="#5a4638"/><path d="M297.500 994.500v11M302.500 994.200v11.600M306.500 995.500v9" stroke="#6a5444" stroke-width="1.700"/><path d="M305 1000a5 5.500 0 0 0 4.500 0" stroke="#e08a18" stroke-width="5" fill="none" opacity=".55"/></g><path d="M292.500 992l-1-5M291 994.500l-5 1" stroke="#7a6a62" stroke-width="1" fill="none"/></svg>
<svg style="position:absolute;left:349px;top:995px" width="20" height="18" viewBox="0 0 20 18"><path d="M1.500 4.500h11v9h-11zM1 1.500h2M1 16.500h2M11 1.500h2M11 16.500h2" fill="none" stroke="#fff" stroke-width="1.300"/><path d="M16.500 3v2.500M16.500 7.500v8" stroke="#fff" stroke-width="1.600"/></svg>
<div style="left:485px;top:984px;width:48px;height:40px;background:#3f3f3f"></div>
<div style="left:391px;top:1022px;width:40px;height:2px;background:#76b9ed"></div>
<div style="left:485px;top:1022px;width:48px;height:2px;background:#76b9ed"></div>
<div style="left:538px;top:1022px;width:39px;height:2px;background:#76b9ed"></div>
<div style="left:587px;top:1022px;width:39px;height:2px;background:#76b9ed"></div>
<div style="left:636px;top:1022px;width:40px;height:2px;background:#76b9ed"></div>
<svg style="position:absolute;left:399px;top:993px" width="24" height="22" viewBox="0 0 24 22"><path d="M1 3h8l2 2h12v3H1z" fill="#e8a820"/><rect x="1" y="6" width="22" height="14" rx="1" fill="#ffd45e"/><path d="M5 13h14v7H5z" fill="#2f8fe0"/><path d="M9 16h6v4H9z" fill="#ffd45e"/></svg>
<svg style="position:absolute;left:447px;top:992px" width="26" height="24" viewBox="0 0 26 24"><ellipse cx="11" cy="14" rx="10" ry="8" fill="#cfe0ee"/><ellipse cx="13" cy="17" rx="3" ry="2.300" fill="#1d1d1d"/><circle cx="6" cy="13" r="2" fill="#e04030"/><circle cx="9" cy="9.500" r="2" fill="#f0c020"/><circle cx="14" cy="9" r="2" fill="#40a040"/><circle cx="5.500" cy="17" r="1.700" fill="#3070d0"/><path d="M23 1l-9 15 2 1.500L25 3z" fill="#d08a40"/><path d="M14 16l-1.500 4 3.500-2.500z" fill="#e8e8e8"/></svg>
<svg style="position:absolute;left:496px;top:992px" width="28" height="26" viewBox="0 0 28 26"><rect x="1" y="2" width="20" height="16" fill="#d8d8d0"/><rect x="3" y="4" width="16" height="12" fill="#3a6a7a"/><path d="M6 19h10v3H6z" fill="#b0b0a8"/><path d="M4 22h14v2H4z" fill="#d0d0c8"/><path d="M5 24C8 14 14 6 26 2 25 12 18 22 7 23z" fill="#44a82c"/><path d="M5.500 24L22 6" stroke="#1c5c12" stroke-width="1.200"/><path d="M9 19l1-6M12.500 15.500l1-6M16 12l1-5M9.500 19.500l7 .5M13 16l7 0M16.500 12.500l7-1.500" stroke="#c0e888" stroke-width="1" fill="none"/></svg>
<svg style="position:absolute;left:545px;top:992px" width="26" height="24" viewBox="0 0 26 24"><defs><linearGradient id="wg" x1="0" y1="0" x2="0" y2="1"><stop offset="0" stop-color="#ffc21c"/><stop offset="1" stop-color="#f08a10"/></linearGradient></defs><circle cx="11" cy="12" r="10.500" fill="url(#wg)"/><path d="M12 21a4 4 0 0 1 .5-8 5 5 0 0 1 9.500 1 3.500 3.500 0 0 1 0 7z" fill="#f2f2f2"/></svg>
<svg style="position:absolute;left:594px;top:992px" width="24" height="24" viewBox="0 0 24 24"><circle cx="12" cy="12" r="11.500" fill="#e33b2e"/><path d="M12 12L2.040 6.250A11.500 11.500 0 0 0 12 23.500z" fill="#2da94f"/><path d="M12 12l0 11.500A11.500 11.500 0 0 0 21.960 6.250z" fill="#fdbd00"/><path d="M12 12L2.040 6.250A11.500 11.500 0 0 1 21.960 6.250z" fill="#e33b2e"/><circle cx="12" cy="12" r="5.300" fill="#fff"/><circle cx="12" cy="12" r="4.200" fill="#3c7ff0"/></svg>
<svg style="position:absolute;left:644px;top:993px" width="24" height="22" viewBox="0 0 24 22"><defs><linearGradient id="pg" x1="0" y1="0" x2="1" y2="1"><stop offset="0" stop-color="#2a9df4"/><stop offset="1" stop-color="#1462c8"/></linearGradient></defs><rect x="1" y="0" width="22" height="22" rx="3" fill="url(#pg)"/><path d="M1 19L10 8l6 7 3-3 4 5v2a3 3 0 0 1-3 3H4a3 3 0 0 1-3-3z" fill="#7fd0ff"/><path d="M1 19L10 8l8 14H4a3 3 0 0 1-3-3z" fill="#4db4f8"/><circle cx="18" cy="5" r="2" fill="#fff"/></svg>
<svg style="position:absolute;left:955px;top:990px" width="170" height="28" viewBox="0 0 170 28"><g fill="none" stroke="#fff" stroke-width="1.200">
<rect x="6.500" y="9.500" width="9" height="9" rx="2"/><path d="M15.500 12.500l3.500-2v7l-3.500-2M7 6.500c2-1.500 7-1.500 9 0M7 21.500c2 1.500 7 1.500 9 0"/>
<rect x="30.500" y="10.500" width="8" height="12" rx="1"/><path d="M32.500 10.500v-4h4v4M38 21l2 2 4-5"/>
<path d="M80 10c4-1 6-1.500 12-1.500" stroke="none"/>
<path d="M126 23c0-7 5-12 12-12M130 23c0-5 3-8 8-8M134 23c0-2.500 1.500-4 4-4"/>
<path d="M146 11.500h3l4.500-4v13l-4.500-4h-3zM156.500 10.500c1.500 2 1.500 5 0 7M159.500 8.500c2.500 3 2.500 8 0 11"/>
</g>
<path d="M59 5l8 2.500c0 8-3 13-8 16-5-3-8-8-8-16z" fill="#fff"/><path d="M59 5v18.500c-5-3-8-8-8-16z" fill="#1d1d1d" opacity=".0"/><path d="M59 6.500v8h-6.800c-.2-2-.2-4-.2-6zM59 14.500h6.800c-1 4-3.500 6.500-6.800 8.500z" fill="#1d1d1d"/><circle cx="65" cy="21" r="4.500" fill="#1e9e3e"/><path d="M62.800 21l1.700 1.700 3-3.200" stroke="#fff" stroke-width="1.200" fill="none"/>
<path d="M78 21a4 4 0 0 1 .5-8 5.500 5.500 0 0 1 10-1 4.500 4.500 0 0 1 1 9z" fill="#dcdcdc"/>
<path d="M100 9l6-3 6 3v11h-12z" fill="#f07818"/><rect x="103" y="11" width="11" height="8" fill="#f8a050" stroke="#fff" stroke-width=".8"/><circle cx="138" cy="23" r="1.500" fill="#fff"/>
</svg>
<div style="left:1131px;top:996px;line-height:16px;font-size:11px;color:#fff">ESP</div>
<div style="left:1152px;top:987px;width:82px;text-align:center;line-height:16px;font-size:12px;color:#fff">9:45 p. m.</div>
<div style="left:1152px;top:1004px;width:82px;text-align:center;line-height:16px;font-size:12px;color:#fff">20/5/2025</div>
<svg style="position:absolute;left:1238px;top:995px" width="20" height="20" viewBox="0 0 20 20"><path d="M1.500 1.500h16v12h-5l-2.500 3-2.500-3h-6z" fill="none" stroke="#fff" stroke-width="1.200"/></svg>
<div style="left:1275px;top:984px;width:1px;height:40px;background:#5c5c5c"></div>
</div></body></html>
